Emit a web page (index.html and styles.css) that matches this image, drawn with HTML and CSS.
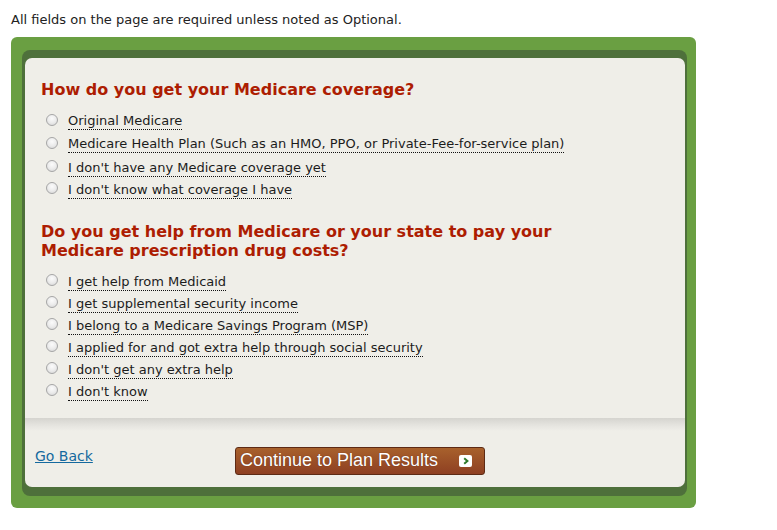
FILE: index.html
```html
<!DOCTYPE html>
<html>
<head>
<meta charset="utf-8">
<link rel="stylesheet" href="styles.css">
</head>
<body>
<p class="note">All fields on the page are required unless noted as Optional.</p>
<div class="frame">
  <div class="shade">
    <div class="panel">
      <div class="content">
        <h2 class="q">How do you get your Medicare coverage?</h2>
        <div class="opts">
          <label class="opt r1"><input type="radio" name="cov"><span class="lbl">Original Medicare</span></label>
          <label class="opt r2"><input type="radio" name="cov"><span class="lbl">Medicare Health Plan (Such as an HMO, PPO, or Private-Fee-for-service plan)</span></label>
          <label class="opt"><input type="radio" name="cov"><span class="lbl">I don't have any Medicare coverage yet</span></label>
          <label class="opt"><input type="radio" name="cov"><span class="lbl">I don't know what coverage I have</span></label>
        </div>
        <h2 class="q q2">Do you get help from Medicare or your state to pay your<br>Medicare prescription drug costs?</h2>
        <div class="opts">
          <label class="opt"><input type="radio" name="help"><span class="lbl">I get help from Medicaid</span></label>
          <label class="opt"><input type="radio" name="help"><span class="lbl">I get supplemental security income</span></label>
          <label class="opt"><input type="radio" name="help"><span class="lbl">I belong to a Medicare Savings Program (MSP)</span></label>
          <label class="opt"><input type="radio" name="help"><span class="lbl">I applied for and got extra help through social security</span></label>
          <label class="opt"><input type="radio" name="help"><span class="lbl">I don't get any extra help</span></label>
          <label class="opt"><input type="radio" name="help"><span class="lbl">I don't know</span></label>
        </div>
      </div>
      <div class="divider"></div>
      <div class="footer">
        <a class="back" href="#">Go Back</a>
        <button class="go" type="button"><span class="go-text">Continue to Plan Results</span><span class="go-icon"><svg width="8" height="8" viewBox="0 0 8 8"><path d="M2.2 1.2 L5.4 4 L2.2 6.8" fill="none" stroke="#2f7a2a" stroke-width="2"/></svg></span></button>
      </div>
    </div>
  </div>
</div>
</body>
</html>
```
FILE: styles.css
```css
html, body {
  margin: 0;
  padding: 0;
  background: #ffffff;
}
body {
  padding: 0 0 0 11px;
  font-family: "DejaVu Sans", Verdana, sans-serif;
  color: #222;
}
.note {
  margin: 0;
  padding-top: 12px;
  height: 25px;
  font-size: 13px;
  line-height: 16px;
  color: #222;
}
.frame {
  width: 685px;
  box-sizing: border-box;
  background: #6a9f42;
  border-radius: 6px;
  padding: 13px 9px 12px 11px;
}
.shade {
  background: #4e703b;
  border-radius: 8px;
  padding: 8px 2px 9px 3px;
}
.panel {
  background: #efeee8;
  border-radius: 7px;
  padding-bottom: 12px;
}
.content {
  padding: 22px 20px 15px 16px;
}
.q {
  margin: 0;
  font-size: 16px;
  line-height: 19px;
  font-weight: bold;
  color: #ad1d02;
}
.q2 {
  margin-top: 21px;
}
.opts {
  margin-top: 12px;
  display: flex;
  flex-direction: column;
}
.q2 + .opts {
  margin-top: 11px;
}
.opt {
  display: flex;
  align-items: center;
  height: 22px;
  padding-left: 5px;
  font-size: 13px;
}
.opt.r1 { height: 21px; }
.opt.r2 { height: 25px; }
.opt input {
  appearance: none;
  -webkit-appearance: none;
  margin: 0 10px 0 0;
  width: 12px;
  height: 12px;
  border-radius: 50%;
  border: 1px solid #a6a6a6;
  background: radial-gradient(circle at 50% 35%, #fbfbfb 0%, #ececec 50%, #d4d4d4 100%);
  position: relative;
  top: -2px;
  flex: none;
}
.lbl {
  color: #1c1c1c;
  border-bottom: 1px dotted #111;
  line-height: 15px;
  padding-bottom: 1px;
}
.divider {
  height: 13px;
  background: linear-gradient(#d5d4cf, #e6e5e0 60%, #efeee8);
}
.footer {
  display: grid;
  grid-template-columns: 200px auto;
  justify-content: start;
  align-items: start;
  padding: 16px 0 0 10px;
}
.back {
  font-size: 14px;
  line-height: 16px;
  color: #15699e;
  padding-top: 1px;
}
.go {
  display: flex;
  align-items: center;
  width: 250px;
  height: 28px;
  box-sizing: border-box;
  padding: 0 0 0 4px;
  margin: 0;
  border: 1px solid #5d2a14;
  border-radius: 3px;
  background: linear-gradient(#a8612c, #8e3f22);
  color: #fff;
  font-family: "Liberation Sans", Arial, sans-serif;
  font-size: 18px;
  cursor: pointer;
}
.go-text {
  text-shadow: 0 0 1px #5a2410;
  position: relative;
  top: -1px;
}
.go-icon {
  margin-left: 21px;
  width: 13px;
  height: 12px;
  background: #fff;
  border-radius: 2px;
  display: flex;
  align-items: center;
  justify-content: center;
}
```
